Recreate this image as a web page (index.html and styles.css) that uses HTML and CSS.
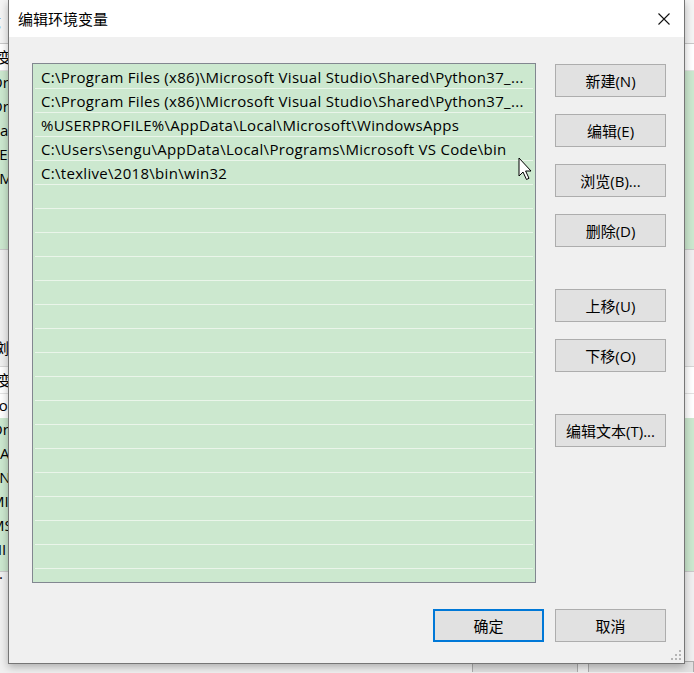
FILE: index.html
```html
<!DOCTYPE html>
<html lang="zh-CN">
<head>
    <meta charset="UTF-8">
    <title>编辑环境变量</title>
    <link rel="stylesheet" href="styles.css">
</head>
<body>
    <!-- window behind the dialog, only its edges show -->
    <div class="bgwin">
        <div class="bg-top"><span class="cut">Setting</span></div>
        <div class="bg-head"><span class="cut">变量</span></div>
        <div class="bg-list">
            <div class="bg-row"><span class="cut">Or</span></div>
            <div class="bg-row"><span class="cut">Or</span></div>
            <div class="bg-row"><span class="cut">Pa</span></div>
            <div class="bg-row"><span class="cut">TE</span></div>
            <div class="bg-row"><span class="cut">TM</span></div>
        </div>
        <div class="bg-gap"><span class="cut">浏</span></div>
        <div class="bg-head"><span class="cut">变量</span></div>
        <div class="bg-row white"><span class="cut">Lo</span></div>
        <div class="bg-list short">
            <div class="bg-row"><span class="cut">Or</span></div>
            <div class="bg-row"><span class="cut">PA</span></div>
            <div class="bg-row"><span class="cut">EN</span></div>
            <div class="bg-row"><span class="cut">MI</span></div>
            <div class="bg-row"><span class="cut">MS</span></div>
            <div class="bg-row"><span class="cut">HI</span></div>
            <div class="bg-row"><span class="cut">...</span></div>
        </div>
        <div class="bg-foot">
            <div class="bg-btn"></div>
            <div class="bg-btn"></div>
        </div>
    </div>

    <div class="dialog">
        <div class="titlebar">
            <span class="title">编辑环境变量</span>
            <svg class="close" width="12" height="12" viewBox="0 0 12 12">
                <path d="M0.5 0.5 L11.5 11.5 M11.5 0.5 L0.5 11.5" stroke="#111" stroke-width="1.1" fill="none"/>
            </svg>
        </div>

        <div class="content">
            <div class="list">
                <div class="row">C:\Program Files (x86)\Microsoft Visual Studio\Shared\Python37_...</div>
                <div class="row">C:\Program Files (x86)\Microsoft Visual Studio\Shared\Python37_...</div>
                <div class="row">%USERPROFILE%\AppData\Local\Microsoft\WindowsApps</div>
                <div class="row">C:\Users\sengu\AppData\Local\Programs\Microsoft VS Code\bin</div>
                <div class="row">C:\texlive\2018\bin\win32</div>
                <div class="row"></div>
                <div class="row"></div>
                <div class="row"></div>
                <div class="row"></div>
                <div class="row"></div>
                <div class="row"></div>
                <div class="row"></div>
                <div class="row"></div>
                <div class="row"></div>
                <div class="row"></div>
                <div class="row"></div>
                <div class="row"></div>
                <div class="row"></div>
                <div class="row"></div>
                <div class="row"></div>
                <div class="row"></div>
                <div class="row"></div>

                <svg class="cursor" width="14" height="24" viewBox="0 0 14 24">
                    <path d="M1 1 L1 19 L5 15 L8.5 22.5 L11 21.3 L7.6 14 L13 14 Z" fill="#fff" stroke="#000" stroke-width="1" stroke-linejoin="miter"/>
                </svg>
            </div>

            <div class="side">
                <button class="btn">新建(N)</button>
                <button class="btn">编辑(E)</button>
                <button class="btn">浏览(B)...</button>
                <button class="btn">删除(D)</button>
                <button class="btn group">上移(U)</button>
                <button class="btn">下移(O)</button>
                <button class="btn group">编辑文本(T)...</button>
            </div>
        </div>

        <div class="footer">
            <button class="btn default">确定</button>
            <button class="btn">取消</button>
        </div>

        <svg class="grip" width="12" height="12" viewBox="0 0 12 12">
            <rect x="9" y="1" width="2" height="2" fill="#b5b5b5"/>
            <rect x="5" y="5" width="2" height="2" fill="#b5b5b5"/>
            <rect x="9" y="5" width="2" height="2" fill="#b5b5b5"/>
            <rect x="1" y="9" width="2" height="2" fill="#b5b5b5"/>
            <rect x="5" y="9" width="2" height="2" fill="#b5b5b5"/>
            <rect x="9" y="9" width="2" height="2" fill="#b5b5b5"/>
        </svg>
    </div>
</body>
</html>
```

FILE: styles.css
```css
html, body {
    margin: 0;
    padding: 0;
}
body {
    width: 694px;
    height: 673px;
    overflow: hidden;
    position: relative;
    background: #f0f0f0;
    font-family: "Open Sans", "Noto Sans CJK SC", sans-serif;
    font-size: 15px;
    color: #000;
}

/* background window */
.bgwin {
    width: 694px;
}
.cut {
    display: block;
    margin-left: -4px;
    white-space: nowrap;
}
.bg-top {
    height: 43px;
    line-height: 40px;
    background: #f4f4f4;
    border-bottom: 1px solid #c9c9c9;
}
.bg-top .cut {
    margin-left: -48px;
}
.bg-head {
    height: 26px;
    line-height: 26px;
    background: #fff;
    border-bottom: 1px solid #e3e3e3;
}
.bg-head .cut {
    margin-left: -3px;
}
.bg-list {
    height: 178px;
    background: #cce8cf;
    border-bottom: 1px solid #c9c9c9;
}
.bg-list.short {
    height: 153px;
}
.bg-row {
    height: 24px;
    line-height: 22px;
}
.bg-row.white {
    background: #fff;
}
.bg-row .cut {
    margin-left: -9px;
}
.bg-gap {
    height: 116px;
    display: flex;
    flex-direction: column;
    justify-content: flex-end;
    line-height: 36px;
    border-bottom: 1px solid #d6d6d6;
}
.bg-gap .cut {
    margin-left: -6px;
}
.bg-foot {
    height: 100px;
    display: flex;
    align-items: flex-end;
    gap: 10px;
    padding-left: 472px;
}
.bg-btn {
    width: 109px;
    height: 10px;
    border: 1px solid #adadad;
    border-bottom: none;
    background: #e1e1e1;
}

/* dialog */
.dialog {
    position: absolute;
    left: 8px;
    top: 0;
    width: 677px;
    height: 664px;
    box-sizing: border-box;
    border: 1px solid #767676;
    border-top: none;
    background: #f0f0f0;
    box-shadow: 0 3px 8px rgba(0, 0, 0, 0.28);
    display: flex;
    flex-direction: column;
}
.titlebar {
    height: 37px;
    flex: none;
    background: #fff;
    display: flex;
    align-items: center;
    justify-content: space-between;
    padding: 0 14px 0 9px;
}
.title {
    font-family: "Noto Sans CJK SC", sans-serif;
    font-size: 15px;
}
.close {
    display: block;
}
.content {
    display: flex;
    gap: 19px;
    padding: 26px 18px 0 23px;
}
.list {
    position: relative;
    width: 504px;
    height: 520px;
    box-sizing: border-box;
    border: 1px solid #828790;
    background: #cce8cf;
    overflow: hidden;
}
.row {
    height: 24px;
    box-sizing: border-box;
    margin: 0 2px;
    padding-left: 6px;
    border-top: 1px solid #eaf5ea;
    line-height: 24px;
    letter-spacing: 0.3px;
    white-space: nowrap;
}
.row:first-child {
    border-top-color: transparent;
}
.cursor {
    position: absolute;
    left: 485px;
    top: 93px;
}
.side {
    width: 111px;
    display: flex;
    flex-direction: column;
    gap: 17px;
    padding-top: 1px;
}
.btn {
    width: 111px;
    height: 33px;
    box-sizing: border-box;
    border: 1px solid #adadad;
    background: #e1e1e1;
    font-family: "Open Sans", "Noto Sans CJK SC", sans-serif;
    font-size: 15px;
    color: #000;
    padding: 0;
}
.btn.group {
    margin-top: 25px;
}
.btn.default {
    border: 2px solid #0078d7;
}
.footer {
    display: flex;
    justify-content: flex-end;
    gap: 11px;
    padding: 26px 18px 0 0;
}
.grip {
    position: absolute;
    right: 2px;
    bottom: 2px;
}
```
